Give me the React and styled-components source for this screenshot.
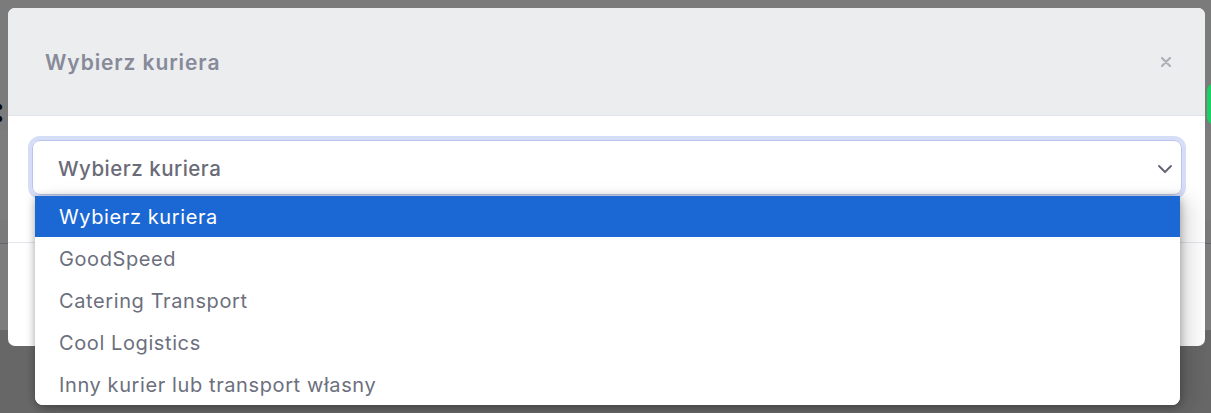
import React from "react"
import styled, { createGlobalStyle } from "styled-components"

const GlobalStyle = createGlobalStyle`
  html, body {
    margin: 0;
    padding: 0;
    height: 100%;
    overflow: hidden;
  }
  body {
    font-family: Inter, "Noto Sans", "Liberation Sans", sans-serif;
    background: #cecece;
  }
`

// strona pod spodem (przyciemniona przez overlay)
const Page = styled.div`
  display: flex;
  flex-direction: column;
  height: 413px;
`
const PageTop = styled.div`
  height: 88px;
  background: #f6f6f6;
  display: flex;
  justify-content: flex-end;
  align-items: flex-start;
  padding-top: 83px;
  box-sizing: border-box;
`
const GreenBtn = styled.div`
  width: 40px;
  height: 42px;
  margin-right: -36px;
  border-radius: 8px;
  background: #1ad164;
  position: relative;
  z-index: 1;
`
const PageBand = styled.div`
  height: ${(p) => p.h}px;
  box-sizing: border-box;
  background: ${(p) => p.bg};
  border-bottom: ${(p) => (p.line ? "1px solid #c8c8d8" : "none")};
  margin-left: -${(p) => p.shift || 0}px;
  color: ${(p) => p.color || "#111"};
  font-size: ${(p) => p.size || 20}px;
  font-weight: ${(p) => p.weight || 400};
  display: flex;
  align-items: center;
`
const PageRest = styled.div`
  flex: 1;
  background: #cecece;
`

const Overlay = styled.div`
  position: fixed;
  inset: 0;
  background: rgba(0, 0, 0, 0.5);
  padding: 8px 6px 0 8px;
`

const Modal = styled.div`
  position: relative;
  background: #fff;
  border-radius: 7px;
  display: flex;
  flex-direction: column;
`
const Header = styled.div`
  height: 108px;
  box-sizing: border-box;
  background: #ecedef;
  border-bottom: 1px solid #e1e4ee;
  border-radius: 7px 7px 0 0;
  display: flex;
  align-items: center;
  justify-content: space-between;
  padding: 0 34px 0 37px;
`
const Title = styled.h5`
  margin: 0;
  padding-top: 2px;
  font-size: 21px;
  font-weight: 600;
  color: #878a98;
  letter-spacing: 0.9px;
`
const CloseBtn = styled.button`
  border: none;
  background: none;
  padding: 0;
  display: flex;
  cursor: pointer;
`
const Body = styled.div`
  padding: 24px 23px 47px 24px;
  border-bottom: 1px solid #e6e7ee;
`
const SelectWrap = styled.div`
  position: relative;
`
const SelectBox = styled.div`
  height: 55px;
  box-sizing: border-box;
  border: 1px solid #b9c4ee;
  border-radius: 8px;
  box-shadow: 0 0 0 4px #d6ddf7;
  display: flex;
  align-items: center;
  justify-content: space-between;
  padding: 2px 8px 0 25px;
  font-size: 20.5px;
  font-weight: 500;
  color: #6a6b78;
  letter-spacing: 0.5px;
`
const Footer = styled.div`
  height: 103px;
`

const Dropdown = styled.ul`
  position: absolute;
  top: 56px;
  left: 3px;
  right: 2px;
  margin: 0;
  padding: 0;
  list-style: none;
  background: #fff;
  border-radius: 0 0 8px 8px;
  overflow: hidden;
  box-shadow: 0 2px 10px rgba(0, 0, 0, 0.35), 12px 4px 20px rgba(0, 0, 0, 0.12);
  z-index: 2;
`
const Option = styled.li`
  height: ${(p) => (p.first ? 41 : 42)}px;
  display: flex;
  align-items: center;
  padding-left: 24px;
  padding-top: 1px;
  box-sizing: border-box;
  font-size: 20px;
  letter-spacing: 0.6px;
  color: ${(p) => (p.active ? "#fff" : "#6c6f7d")};
  background: ${(p) => (p.active ? "#1b67d3" : "#fff")};
`

const options = [
  "Wybierz kuriera",
  "GoodSpeed",
  "Catering Transport",
  "Cool Logistics",
  "Inny kurier lub transport własny",
]

export default function App() {
  return (
    <>
      <GlobalStyle />
      <Page>
        <PageTop>
          <GreenBtn />
        </PageTop>
        <PageBand h={42} bg="#f6f6f6" size={34} weight={800} shift={7}>:</PageBand>
        <PageBand h={90} bg="#fbfbfb" />
        <PageBand h={24} bg="#f4f4f4" line />
        <PageBand h={86} bg="#f9f9f9" />
        <PageRest />
      </Page>
      <Overlay>
        <Modal>
          <Header>
            <Title>Wybierz kuriera</Title>
            <CloseBtn aria-label="close">
              <svg width="10" height="10" viewBox="0 0 10 10">
                <path d="M1 1L9 9M9 1L1 9" stroke="#aeb0b6" strokeWidth="2.2" strokeLinecap="round" />
              </svg>
            </CloseBtn>
          </Header>
          <Body>
            <SelectWrap>
              <SelectBox>
                <span>Wybierz kuriera</span>
                <svg width="16" height="16" viewBox="0 0 16 16">
                  <path d="M2 5l6 6 6-6" fill="none" stroke="#5f6170" strokeWidth="1.8" strokeLinecap="round" strokeLinejoin="round" />
                </svg>
              </SelectBox>
              <Dropdown>
                {options.map((o, i) => (
                  <Option key={o} first={i === 0} active={i === 0}>
                    {o}
                  </Option>
                ))}
              </Dropdown>
            </SelectWrap>
          </Body>
          <Footer />
        </Modal>
      </Overlay>
    </>
  )
}
